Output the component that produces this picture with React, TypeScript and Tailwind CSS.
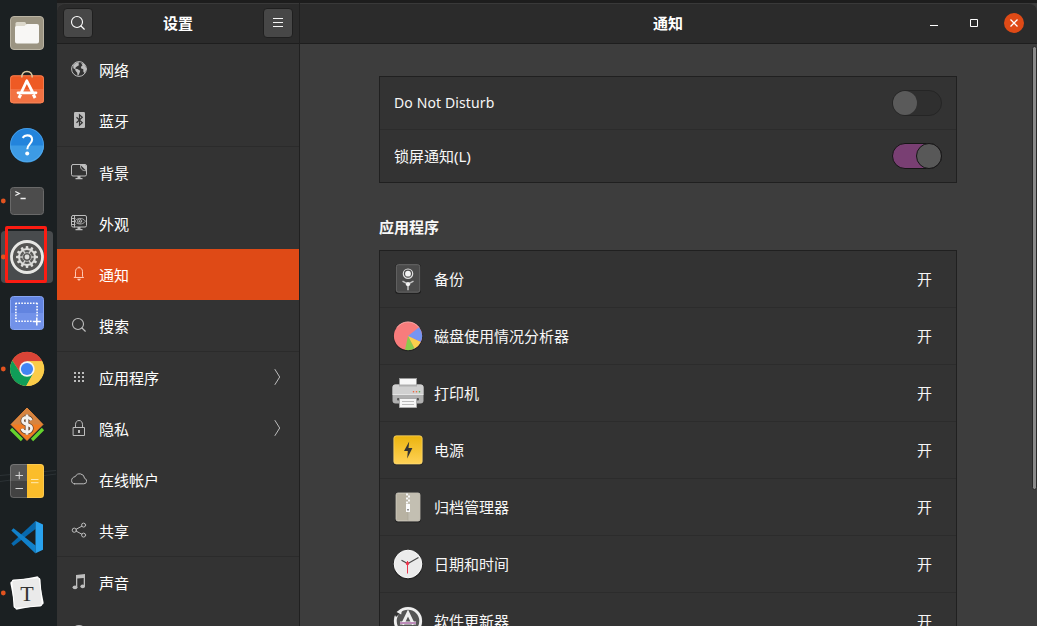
import React, { ReactNode } from "react";

const stroke = { fill: "none", stroke: "currentColor", strokeLinecap: "round", strokeLinejoin: "round" } as const;

/* ---------- Dock ---------- */

const gearTeeth = Array.from({ length: 12 }, (_, i) => i * 30);

const dockIcons: { name: string; running?: boolean; active?: boolean; art: ReactNode }[] = [
  {
    name: "files",
    art: (
      <>
        <rect x="10.5" y="11.5" width="33" height="33" rx="3.5" fill="#9b9482" stroke="#b9b3a3" />
        <path d="M15.500 24v-5.500a1.500 1.500 0 0 1 1.500-1.500h7.500a1.500 1.500 0 0 1 1.500 1.500V24z" fill="#dcd8cb" />
        <path d="M15 22.500a1.500 1.500 0 0 1 1.500-1.500H24c1.500 0 1.500-2 3-2h10a2 2 0 0 1 2 2v15.500a2 2 0 0 1-2 2H17a2 2 0 0 1-2-2z" fill="#f8f7f5" />
      </>
    ),
  },
  {
    name: "software",
    art: (
      <>
        <rect x="10" y="14.300" width="34" height="28" rx="3.500" fill="#ee5a24" />
        <path d="M10 28h34v10.800a3.500 3.500 0 0 1-3.500 3.500h-27a3.500 3.500 0 0 1-3.500-3.500z" fill="#f27243" />
        <rect x="10.500" y="14.800" width="33" height="27" rx="3" fill="none" stroke="#f38a60" strokeOpacity=".7" />
        <path d="M21.800 16.500c0-4 2-6 5.200-6s5.200 2 5.200 6" fill="none" stroke="#dcc9a2" strokeWidth="1.400" />
        <path d="M21.500 31 26.800 19.800 32.500 31M18 31.800h18" fill="none" stroke="#fff" strokeWidth="2.800" strokeLinecap="round" strokeLinejoin="round" />
        <path d="M20.700 33.500 18.900 37M33.300 33.500l1.800 3.500" stroke="#fff" strokeWidth="3" />
      </>
    ),
  },
  {
    name: "help",
    art: (
      <>
        <circle cx="27" cy="28" r="17" fill="#2384dc" />
        <path d="M10 28.500a17 17 0 0 0 34 0z" fill="#3d9be5" />
        <circle cx="27" cy="28" r="16.500" fill="none" stroke="#65b3ee" strokeOpacity=".5" />
        <path d="M22.600 20.800c1-1.500 2.500-2.400 4.600-2.400 2.900 0 4.900 1.600 4.900 4.200 0 4.200-4.800 4.500-4.800 9.700" fill="none" stroke="#fff" strokeWidth="2.100" />
        <circle cx="27.200" cy="36.500" r="2" fill="#fff" />
      </>
    ),
  },
  {
    name: "terminal",
    running: true,
    art: (
      <>
        <rect x="10.500" y="14.500" width="33" height="27" rx="3" fill="#4c4c4c" stroke="#696969" />
        <path d="m15.300 18.500 4 2-4 2M20.500 25.500h5.200" fill="none" stroke="#f0f0f0" strokeWidth="1.300" />
      </>
    ),
  },
  {
    name: "settings",
    running: true,
    active: true,
    art: (
      <>
        <circle cx="27" cy="28" r="16.500" fill="#6b6b69" />
        <circle cx="27" cy="28" r="15.500" fill="#555553" stroke="#e7e7e4" strokeWidth="2.800" />
        {gearTeeth.map((a) => (
          <rect key={a} x="25.700" y="17" width="2.600" height="3.500" rx=".8" fill="#dededb" transform={`rotate(${a} 27 28)`} />
        ))}
        <circle cx="27" cy="28" r="8" fill="#5b5b59" stroke="#dededb" strokeWidth="2" />
        {gearTeeth.filter((a) => a % 60 === 0).map((a) => (
          <path key={a} d="M27 21v3" stroke="#dededb" strokeWidth="1.300" transform={`rotate(${a + 30} 27 28)`} />
        ))}
        <circle cx="27" cy="28" r="4.500" fill="none" stroke="#bdbdba" strokeWidth=".8" />
        <circle cx="27" cy="28" r="2.400" fill="#dededb" />
      </>
    ),
  },
  {
    name: "screenshot",
    art: (
      <>
        <rect x="10.500" y="11.500" width="33" height="33" rx="3" fill="#6284e0" stroke="#86a4f2" />
        <path d="M11 28h32v14a2 2 0 0 1-2 2H13a2 2 0 0 1-2-2z" fill="#7292e9" />
        <path d="M15.500 18.300h22M15.500 36.200h17M15.900 18v18M37.100 18v14" stroke="#fff" strokeWidth="1.600" strokeDasharray="1.600 1.300" />
        <path d="M36.800 32.500v8M32.800 36.500h8" stroke="#fff" strokeWidth="1.500" />
      </>
    ),
  },
  {
    name: "chrome",
    running: true,
    art: (
      <>
        <circle cx="27" cy="28" r="17" fill="#fbcc49" />
        <path d="M12.280 19.500A17 17 0 0 1 42.300 20.300H27L20.300 31.850z" fill="#da4437" />
        <path d="M12.280 19.500A17 17 0 0 0 26.200 45L33.680 31.850 27 28l-6.680 3.850z" fill="#109d58" />
        <path d="M27 20.300h15.300A17 17 0 0 1 26.200 45l7.480-13.150z" fill="#fbcc49" />
        <circle cx="27" cy="28" r="7.700" fill="#f5f5f5" />
        <circle cx="27" cy="28" r="6.100" fill="#4285f4" />
      </>
    ),
  },
  {
    name: "finance",
    art: (
      <>
        <path d="M11 32 22 43M43 32 32 43" stroke="#65d32d" strokeWidth="3.200" />
        <path d="M27 11 43 27.500 27 43.500 11 27.500z" fill="#f17c22" />
        <path d="M27 11 43 27.500H11z" fill="#d68440" />
        <path d="M27 11 43 27.500 27 43.500 11 27.500z" fill="none" stroke="#ef8b3a" strokeWidth=".8" />
        <path d="M31.300 23.400c-.7-2-2.300-3-4.400-3-2.500 0-4.300 1.300-4.300 3.500 0 4.500 9 2.500 9 7.300 0 2.400-2 3.900-4.700 3.900-2.500 0-4.300-1.200-5-3.300M27 17.500v20.300" fill="none" stroke="#61412a" strokeWidth="4.200" />
        <path d="M31.300 23.400c-.7-2-2.300-3-4.400-3-2.500 0-4.300 1.300-4.300 3.500 0 4.500 9 2.500 9 7.300 0 2.400-2 3.900-4.700 3.900-2.500 0-4.300-1.200-5-3.300M27 17.500v20.300" fill="none" stroke="#f3f1ed" strokeWidth="2.800" />
      </>
    ),
  },
  {
    name: "calculator",
    art: (
      <>
        <path d="M0 22.500 56 17.500M0 28.500 56 21" stroke="#2c3235" strokeWidth="1" />
        <path d="M27 11H13.500A3.500 3.500 0 0 0 10 14.500V28h17z" fill="#565656" />
        <path d="M27 28H10v13.500a3.500 3.500 0 0 0 3.500 3.500H27z" fill="#424242" />
        <path d="M27 11h13.500a3.500 3.500 0 0 1 3.500 3.500v27a3.500 3.500 0 0 1-3.500 3.500H27z" fill="#fbbd2b" />
        <rect x="10.500" y="11.500" width="33" height="33" rx="3" fill="none" stroke="#fff" strokeOpacity=".18" />
        <path d="M15.500 22.500h7.500M19.250 18.750v7.500M15.500 35.500h7.500" stroke="#d8d8d8" strokeWidth="1" />
        <path d="M31 26.500h7.500M31 29.700h7.500" stroke="#ffe9b0" strokeWidth="1" />
      </>
    ),
  },
  {
    name: "vscode",
    art: (
      <>
        <path d="M11.300 34.500 35.500 12v8L13.500 37z" fill="#0769ae" />
        <path d="M11.300 21.500 13.500 19.300 35.500 36.500v8z" fill="#1181cb" />
        <path d="M35.500 12 43 15.500v25.300L35.500 44.300z" fill="#29a2ee" />
      </>
    ),
  },
  {
    name: "typora",
    running: true,
    art: (
      <>
        <rect x="12.500" y="13.500" width="29" height="29" rx="2" fill="#fff" transform="rotate(-11 27 28)" />
        <rect x="12.600" y="13.600" width="28.800" height="28.800" rx="2" fill="#fff" transform="rotate(-4 27 28)" />
        <rect x="13.500" y="14.500" width="27" height="27" rx="1.500" fill="#eaeaea" transform="rotate(-6 27 28)" />
        <text x="27" y="36" textAnchor="middle" className="fill-[#333] font-['Liberation_Serif',serif] text-[22px]">T</text>
      </>
    ),
  },
];

function Dock() {
  return (
    <nav className="flex w-[57px] shrink-0 flex-col bg-[#1b2022] pt-[5px]">
      {dockIcons.map((d) => (
        <div key={d.name} className="relative h-14 w-[57px] shrink-0">
          <svg className="block" width="57" height="56" viewBox="0 0 57 56">
            {d.active && <rect x="1" y="2" width="52" height="52" rx="4" fill="#484b4d" />}
            {d.running && <circle cx="3.300" cy="28" r="2.400" fill="#e2531f" />}
            {d.art}
          </svg>
          {d.active && <div className="absolute top-[-3px] left-[5px] h-[57px] w-[42px] rounded-[2px] border-3 border-[#fb1c12]" />}
        </div>
      ))}
    </nav>
  );
}

/* ---------- Sidebar ---------- */

const I = {
  globe: (
    <>
      <circle cx="8" cy="8" r="7.400" {...stroke} />
      <path d="M2.200 4.200 5.400 1.500 8.500 1.300 7.300 3 8.300 4 6.300 5.300 4.800 6.300 4.300 7.700 6.400 7.900 9.200 9.800 8.700 11.600 7.500 14.300 6.500 14.500 6.200 11.800 4.500 9.800 4.300 8.500 2.300 7.200zM10 2l3 .8 2 3.700.3 2.500-1.600 3-1.300-1-.2-3L10.500 7.800 9.800 6l1.700-1.800z" fill="currentColor" />
    </>
  ),
  bluetooth: (
    <>
      <rect x="3" y="0" width="11" height="16" rx="1.200" fill="currentColor" />
      <path d="m5.500 5.200 5.800 5.500L8.500 13.200V2.800l2.800 2.500-5.800 5.500" fill="none" stroke="#333" strokeWidth="1.200" />
    </>
  ),
  background: (
    <>
      <rect x=".5" y=".5" width="15" height="11.500" rx="1.500" {...stroke} />
      <path d="M9.500 1h4.500a1.500 1.500 0 0 1 1.500 1.500V7z" fill="currentColor" />
      <path d="M9.500 1c0 3 .3 5.700 5.800 5.800" {...stroke} strokeWidth=".9" />
      <path d="M6.500 12h3v2h2v1.200h-7V14h2z" fill="currentColor" />
    </>
  ),
  appearance: (
    <>
      <rect x=".5" y=".5" width="15" height="11.500" rx="1.500" {...stroke} />
      <path d="M3.500 1v11M1 3.500h3M1 6.500h3M1 9.500h3" {...stroke} />
      <path d="M3.800 6.200C5.500 3 11.500 2 14.500 6.200 11.500 10.500 5.500 9.500 3.800 6.200z" {...stroke} strokeWidth=".8" />
      <circle cx="8.500" cy="6.200" r="2.100" {...stroke} strokeWidth=".8" />
      <circle cx="8.500" cy="6.200" r="1" fill="currentColor" />
      <path d="M6.500 12h3v2h2v1.200h-7V14h2z" fill="currentColor" />
    </>
  ),
  bell: (
    <>
      <path d="M4.500 10.500V5.800C4.500 3 6 1.700 8 1.700s3.500 1.300 3.500 4.100v4.700l1.200 1H3.300zM8 .8v.7" {...stroke} />
      <path d="M6.300 12.800h3.400c0 1-.7 1.800-1.700 1.800s-1.700-.8-1.700-1.800z" fill="currentColor" />
    </>
  ),
  search: (
    <>
      <circle cx="7" cy="7" r="5.500" {...stroke} strokeWidth="1.100" />
      <path d="m11 11 3.300 3.200" {...stroke} strokeWidth="1.200" />
    </>
  ),
  grid: (
    <>
      {[3, 7, 11].flatMap((y) => [3, 7, 11].map((x) => <rect key={`${x}-${y}`} x={x} y={y} width="2" height="2" fill="currentColor" />))}
    </>
  ),
  lock: (
    <>
      <path d="M2.500 7.500h11v8h-11zM4.500 7.500V4.800C4.500 2 6 .5 8 .5s3.500 1.500 3.500 4.300v2.700" {...stroke} />
      <rect x="7" y="10" width="2" height="3" fill="currentColor" />
    </>
  ),
  cloud: <path d="M3.500 12.800h9.300a2.750 2.750 0 0 0 .8-5.400A4.900 4.900 0 0 0 4.300 5.600C2 6 .6 7.500.6 9.600c0 1.900 1.200 3.200 2.900 3.200z" {...stroke} />,
  share: (
    <>
      <circle cx="3.300" cy="8.200" r="2.100" {...stroke} />
      <circle cx="12.600" cy="3.100" r="2" {...stroke} />
      <circle cx="12.600" cy="13.100" r="2" {...stroke} />
      <path d="m5.300 7.200 5.500-3M5.300 9.200l5.500 3" {...stroke} />
    </>
  ),
  music: (
    <>
      <path d="M5 1 14 0v12.500h-1.300V4L6.300 4.600v9H5z" fill="currentColor" />
      <ellipse cx="4" cy="13.300" rx="2.400" ry="1.900" fill="currentColor" />
      <ellipse cx="11.700" cy="12.300" rx="2.300" ry="1.900" fill="currentColor" />
    </>
  ),
  power: <circle cx="8" cy="8" r="8" fill="currentColor" />,
};

const groups: { label: string; icon: keyof typeof I; arrow?: boolean; selected?: boolean }[][] = [
  [
    { label: "网络", icon: "globe" },
    { label: "蓝牙", icon: "bluetooth" },
  ],
  [
    { label: "背景", icon: "background" },
    { label: "外观", icon: "appearance" },
    { label: "通知", icon: "bell", selected: true },
    { label: "搜索", icon: "search" },
  ],
  [
    { label: "应用程序", icon: "grid", arrow: true },
    { label: "隐私", icon: "lock", arrow: true },
    { label: "在线帐户", icon: "cloud" },
    { label: "共享", icon: "share" },
  ],
  [
    { label: "声音", icon: "music" },
    { label: "电源", icon: "power" },
  ],
];

function Sidebar() {
  return (
    <aside className="flex w-[243px] shrink-0 flex-col border-r border-[#202020] bg-[#333]">
      <div className="flex h-[41px] shrink-0 items-center justify-between rounded-tl-lg border-t border-b border-t-[#393939] border-b-[#1e1e1e] bg-[#2b2b2b] px-[6px] pb-px">
        <button className="flex size-[30px] items-center justify-center rounded-[4px] border border-[#1f1f1f] bg-[#474747]">
          <svg className="text-white" width="16" height="16" viewBox="0 0 16 16">{I.search}</svg>
        </button>
        <h1 className="text-[15px] leading-5 font-bold text-white">设置</h1>
        <button className="flex size-[30px] items-center justify-center rounded-[4px] border border-[#1f1f1f] bg-[#474747]">
          <svg width="16" height="16" viewBox="0 0 16 16">
            <path d="M3 3.500h10M3 7.500h10M3 11.500h10" stroke="#f5f5f5" />
          </svg>
        </button>
      </div>
      {groups.map((g, gi) => (
        <ul key={gi} className={gi ? "shrink-0 border-t border-[#2b2b2b]" : "shrink-0"}>
          {g.map((r) => (
            <li key={r.label} className={`flex h-[51px] items-center pr-[14px] pb-px pl-[14px] ${r.selected ? "bg-[#df4a16] text-[#ffc7b2]" : "text-[#bdbdbd]"}`}>
              <svg className="shrink-0" width="16" height="16" viewBox="0 0 16 16">{I[r.icon]}</svg>
              <span className="ml-3 grow pt-px text-[15px] leading-5 text-white">{r.label}</span>
              {r.arrow && (
                <svg width="16" height="16" viewBox="0 0 16 16">
                  <path d="m6 .5 4.700 7.500L6 15.500" {...stroke} />
                </svg>
              )}
            </li>
          ))}
        </ul>
      ))}
    </aside>
  );
}

/* ---------- Notification panel ---------- */

const apps: { name: string; art: ReactNode }[] = [
  {
    name: "备份",
    art: (
      <g transform="translate(-.2 -.300)">
        <rect x="3.500" y="1.500" width="25.500" height="29.500" rx="2.500" fill="#1d1d1d" />
        <rect x="4.500" y="2" width="23.500" height="27.500" rx="2" fill="#4b4b4b" stroke="#6a6a6a" />
        <circle cx="16.200" cy="11" r="4.700" fill="none" stroke="#dedede" strokeWidth="1.200" />
        <circle cx="16.200" cy="11" r="2.900" fill="#f4f4f4" />
        <path d="m10.700 18.500 5.500 3 5.500-3M16.200 21v6.500" fill="none" stroke="#c4c4c4" strokeWidth="1.500" />
        <circle cx="16.200" cy="21.500" r="2.100" fill="#f4f4f4" />
      </g>
    ),
  },
  {
    name: "磁盘使用情况分析器",
    art: (
      <>
        <circle cx="16" cy="16.800" r="14.500" fill="#222" />
        <circle cx="16" cy="16" r="14.100" fill="#f87c7c" />
        <path d="M16 16 27 7.200A14.100 14.100 0 0 1 28.700 22z" fill="#7795f2" />
        <path d="M16 16 28.700 22a14.100 14.100 0 0 1-6.200 6.500z" fill="#fcd04c" />
        <path d="M16 16 22.500 28.500A14.100 14.100 0 0 1 13 29.800z" fill="#8bcb4c" />
        <path d="M5 7.500A13.700 13.700 0 0 1 27 7.500" fill="none" stroke="#ffaaa8" />
      </>
    ),
  },
  {
    name: "打印机",
    art: (
      <>
        <rect x="7.500" y="1.500" width="17" height="10" fill="#f8f8f8" stroke="#999" />
        <rect x=".5" y="7.500" width="31" height="19" rx="3" fill="#b0b0b0" />
        <path d="M3.500 7.500H7v2h18v-2h3.500a3 3 0 0 1 3 3V17H.5v-6.500a3 3 0 0 1 3-3z" fill="#d0d0d0" />
        <path d="M.5 17.500h31" stroke="#e4e4e4" />
        <rect x="5" y="21" width="22" height="2.500" rx="1" fill="#555" />
        <path d="M7.500 21.500h17v9h-17z" fill="#f6f6f6" stroke="#aaa" />
        <path d="M10 24.500h12M10 27.500h12" stroke="#bbb" />
        <circle cx="21.500" cy="14.800" r=".8" fill="#ed5a35" />
        <circle cx="24.500" cy="14.800" r=".8" fill="#ef6535" />
        <circle cx="27.500" cy="14.800" r=".8" fill="#4bb344" />
      </>
    ),
  },
  {
    name: "电源",
    art: (
      <>
        <defs>
          <linearGradient id="powerFill" x2="0" y2="1">
            <stop stopColor="#ebb40e" />
            <stop offset="1" stopColor="#ffd257" />
          </linearGradient>
        </defs>
        <rect x="1.200" y="1.500" width="29.600" height="29.800" rx="3" fill="#222" />
        <rect x="1.800" y="1.800" width="28.400" height="28.200" rx="2.500" fill="url(#powerFill)" stroke="#ffde7b" strokeWidth=".7" />
        <path d="M17.200 7.500 12 17h3.800L15.200 24.500 20.400 14h-3.900z" fill="#333" />
      </>
    ),
  },
  {
    name: "归档管理器",
    art: (
      <>
        <rect x="3.300" y="2" width="25.400" height="29.500" rx="2.500" fill="#222" />
        <rect x="4" y="2" width="24" height="28" rx="2" fill="#b8b2a2" stroke="#d4d0c5" strokeWidth=".8" />
        <path d="M16 2.500h11.500v27H16z" fill="#c3bfb2" />
        <path d="M14 2.500h2v2h-2zM16 4.500h2v2h-2zM14 6.500h2v2h-2zM16 8.500h2v2h-2zM14 10.500h2v2h-2z" fill="#f7f7f7" />
        <path d="M14 13h4v8h-4z" fill="#fafafa" />
        <rect x="15.200" y="18" width="1.600" height="1.500" fill="#777" />
        <path d="M16 21.500v8" stroke="#a19c8d" strokeWidth=".5" />
      </>
    ),
  },
  {
    name: "日期和时间",
    art: (
      <>
        <circle cx="16" cy="16.700" r="14.700" fill="#222" />
        <circle cx="16" cy="16" r="13.800" fill="#ebebeb" stroke="#fafafa" />
        <path d="M16 15.500 26.500 9.500M15.500 15.500l-6-3.300" stroke="#4a4a4a" strokeWidth="1.200" />
        <path d="M15.500 13v12.500" stroke="#eb354c" strokeWidth="1" />
        <circle cx="15.500" cy="15.500" r="1.700" fill="#eb354c" />
      </>
    ),
  },
  {
    name: "软件更新器",
    art: (
      <>
        <circle cx="16" cy="16" r="14.500" fill="#454545" />
        <circle cx="16" cy="16" r="12.700" fill="#555" stroke="#efefef" strokeWidth="2.800" />
        <path d="m1.500 7 8 0-5.500 5z" fill="#333" />
        <path d="m4.500 7 5.500-2.800-.8 5.300z" fill="#efefef" />
        <path d="M10.500 19.500 16 8l5.500 11.500" fill="none" stroke="#efefef" strokeWidth="3" />
        <path d="M8 18h16" stroke="#f5f5f5" strokeWidth="3" />
        <path d="M8 18h16" stroke="#954590" strokeWidth="1.200" />
      </>
    ),
  },
];

function Switch({ on }: { on?: boolean }) {
  return on ? (
    <div className="flex h-[26px] w-[50px] justify-end rounded-full border border-[#151515] bg-[#793f73]">
      <div className="-m-px size-[26px] rounded-full border border-[#151515] bg-[#585858]" />
    </div>
  ) : (
    <div className="flex h-[26px] w-[50px] rounded-full border border-[#252525] bg-[#2f2f2f]">
      <div className="size-6 rounded-full bg-[#5a5a5a]" />
    </div>
  );
}

function Panel() {
  return (
    <main className="flex min-w-0 grow flex-col bg-[#3d3d3d]">
      <div className="grid h-[41px] shrink-0 grid-cols-[120px_1fr_120px] items-center rounded-tr-lg border-t border-b border-t-[#393939] border-b-[#1e1e1e] bg-[#2b2b2b] pb-px">
        <h2 className="col-start-2 pr-px text-center text-[15px] leading-5 font-bold text-white">通知</h2>
        <div className="flex items-center justify-end pr-[13px]">
          <svg className="mr-6" width="16" height="16" viewBox="0 0 16 16">
            <path d="M4 10.500h8" stroke="#fff" />
          </svg>
          <svg className="mr-[22px]" width="16" height="16" viewBox="0 0 16 16">
            <path d="M4.500 4.500h7v7h-7z" fill="none" stroke="#fff" />
          </svg>
          <svg width="20" height="20" viewBox="0 0 20 20">
            <circle cx="10" cy="10" r="10" fill="#df4a16" />
            <path d="m6.500 6.500 7 7m0-7-7 7" stroke="#fff" strokeWidth="1.300" />
          </svg>
        </div>
      </div>
      <div className="flex min-h-0 grow justify-between overflow-hidden">
        <div className="ml-[79px] w-[578px] shrink-0 pt-8 text-[15px] leading-5 text-[#f7f7f7]">
          <section className="divide-y divide-[#2c2c2c] border border-[#202020] bg-[#333]">
            <div className="flex h-[53px] items-center justify-between px-[14px]">
              <span className="text-[14px] tracking-[0.120px]">Do Not Disturb</span>
              <Switch />
            </div>
            <div className="flex h-[52px] items-center justify-between px-[14px]">
              <span>锁屏通知(L)</span>
              <Switch on />
            </div>
          </section>
          <h3 className="mt-[34px] mb-[13px] font-bold">应用程序</h3>
          <section className="border border-[#202020] bg-[#333]">
            {apps.map((a) => (
              <div key={a.name} className="flex h-[57px] items-center border-b border-[#2c2c2c] pr-6 pl-3">
                <svg className="shrink-0" width="32" height="32" viewBox="0 0 32 32">{a.art}</svg>
                <span className="ml-[10px] grow">{a.name}</span>
                <span>开</span>
              </div>
            ))}
          </section>
        </div>
        <div className="mt-[2px] h-[444px] w-[5px] rounded-full border border-[#292929] bg-[#8a8a8a]" />
      </div>
    </main>
  );
}

export default function App() {
  return (
    <div className="flex h-[626px] w-[1037px] overflow-hidden bg-[#1d1d1d] font-['Noto_Sans','Noto_Sans_CJK_SC',sans-serif]">
      <Dock />
      <div className="flex min-w-0 grow bg-[#1b2022]">
        <div className="flex min-w-0 grow border-t-3 border-[#1d1d1d]">
          <Sidebar />
          <Panel />
        </div>
      </div>
    </div>
  );
}
